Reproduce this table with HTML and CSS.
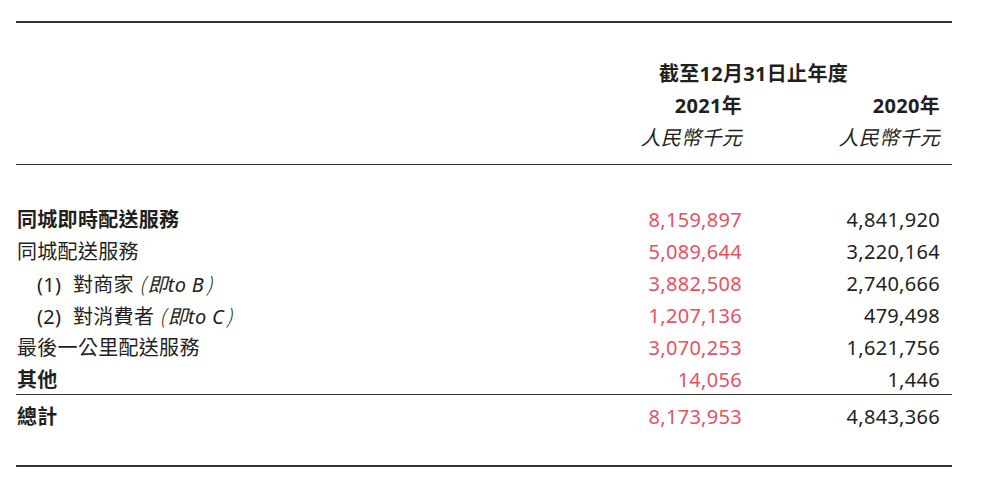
FILE: index.html
```html
<!DOCTYPE html>
<html lang="zh-Hant">
<head>
<meta charset="utf-8">
<link rel="stylesheet" href="styles.css">
</head>
<body>
<div class="sheet">
  <div class="head">
    <div class="period">截至12月31日止年度</div>
    <div class="cols">
      <div class="yr c1">2021年</div>
      <div class="yr c2">2020年</div>
      <div class="unit c1">人民幣千元</div>
      <div class="unit c2">人民幣千元</div>
    </div>
  </div>
  <div class="body">
    <div class="row bold"><div class="lbl">同城即時配送服務</div><div class="v cur">8,159,897</div><div class="v">4,841,920</div></div>
    <div class="row"><div class="lbl">同城配送服務</div><div class="v cur">5,089,644</div><div class="v">3,220,164</div></div>
    <div class="row"><div class="lbl sub"><span class="num">(1)</span>對商家<i class="note"><span class="par">(</span>即to B<span class="par">)</span></i></div><div class="v cur">3,882,508</div><div class="v">2,740,666</div></div>
    <div class="row"><div class="lbl sub"><span class="num">(2)</span>對消費者<i class="note"><span class="par">(</span>即to C<span class="par">)</span></i></div><div class="v cur">1,207,136</div><div class="v">479,498</div></div>
    <div class="row"><div class="lbl">最後一公里配送服務</div><div class="v cur">3,070,253</div><div class="v">1,621,756</div></div>
    <div class="row bold last"><div class="lbl">其他</div><div class="v cur">14,056</div><div class="v">1,446</div></div>
  </div>
  <div class="total">
    <div class="row bold"><div class="lbl">總計</div><div class="v cur">8,173,953</div><div class="v">4,843,366</div></div>
  </div>
</div>
</body>
</html>
```
FILE: styles.css
```css
html, body {
  margin: 0;
  padding: 0;
  background: #ffffff;
}
body {
  font-family: "Noto Sans", "Noto Sans CJK TC", sans-serif;
  font-size: 20px;
  color: #231f20;
  letter-spacing: 0.3px;
}
.sheet {
  margin: 21px 0 0 16px;
  width: 936px;
  border-top: 2px solid #333;
  border-bottom: 2px solid #333;
}
.head {
  padding: 35px 0 10px;
  border-bottom: 1px solid #333;
  line-height: 32px;
}
.period {
  font-weight: 700;
  text-align: right;
  padding-right: 104px;
}
.cols {
  display: grid;
  grid-template-columns: 526px 200px 198px;
}
.c1 { grid-column: 2; }
.c2 { grid-column: 3; }
.yr {
  font-weight: 700;
  text-align: right;
}
.unit {
  font-style: italic;
  text-align: right;
}
.body {
  padding-top: 39px;
  border-bottom: 1px solid #333;
}
.row {
  display: grid;
  grid-template-columns: 526px 200px 198px;
  line-height: 32px;
  height: 32px;
}
.row.last {
  height: 30px;
}
.bold .lbl {
  font-weight: 700;
}
.lbl {
  padding-left: 1px;
  white-space: nowrap;
}
.sub {
  padding-left: 21px;
}
.num {
  display: inline-block;
  width: 36px;
}
.note {
  margin-left: 3px;
}
.par {
  font-family: "Noto Sans CJK TC", sans-serif;
  font-weight: 300;
  margin: 0 2px;
}
.v {
  text-align: right;
}
.cur {
  color: #e8505e;
}
.total {
  padding: 6px 0 32px;
}
```
